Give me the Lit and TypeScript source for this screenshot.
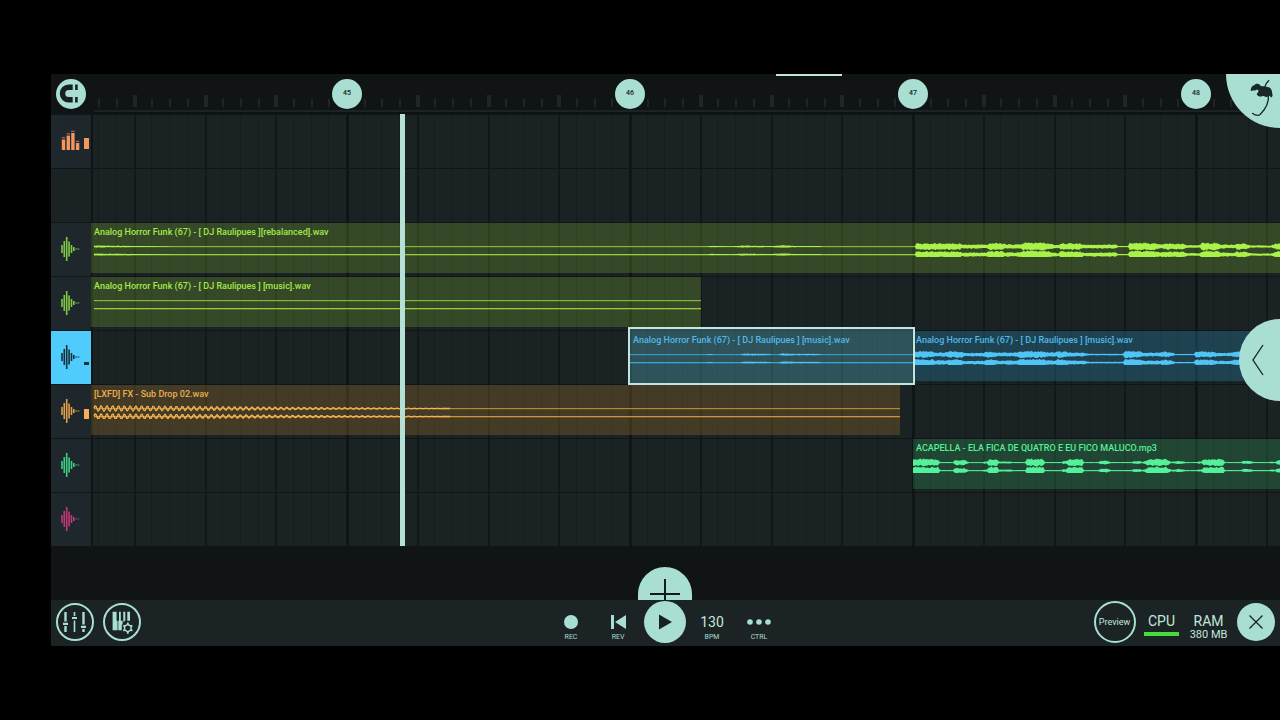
import { LitElement, html, svg, css, nothing } from "lit";
import { customElement, property, state } from "lit/decorators.js";
import { classMap } from "lit/directives/class-map.js";
import { styleMap } from "lit/directives/style-map.js";

type Point = [number, number];

interface Clip {
  name: string;
  start: number;
  end: number;
  tone: string;
  selected?: boolean;
  envelope?: Point[];
  sweep?: boolean;
}

interface Track {
  name: string;
  kind: "synth" | "audio";
  tone: string;
  level?: "high" | "mid" | "low";
  clips: Clip[];
}

const BAR = 283;
const FIRST_BAR = 45;
const FIRST_BAR_X = 256;
const VIEW_START = 44;
const SONG_END = 57;

const barX = (bar: number) =>
  Math.max(0, Math.round(FIRST_BAR_X + (bar - FIRST_BAR) * BAR));

const noise = (n: number) => {
  const v = Math.sin(n * 12.9898) * 43758.5453;
  return v - Math.floor(v);
};

const levelAt = (points: Point[], x: number) => {
  for (let i = 1; i < points.length; i++) {
    const [x0, a0] = points[i - 1];
    const [x1, a1] = points[i];
    if (x <= x1) return a0 + ((a1 - a0) * (x - x0)) / (x1 - x0 || 1);
  }
  return 0;
};

const wavePath = (points: Point[], mid: number, seed: number) => {
  const from = points[0][0];
  const to = points[points.length - 1][0];
  let top = "";
  let bottom = "";
  for (let x = from; x <= to; x++) {
    const a = levelAt(points, x);
    const up = a * (0.7 + 0.5 * noise(x + seed));
    const down = a * (0.7 + 0.5 * noise(x * 3 + seed));
    top += `${top ? "L" : "M"}${x} ${(mid - up).toFixed(1)}`;
    bottom = `L${x} ${(mid + down).toFixed(1)}` + bottom;
  }
  return top + bottom + "Z";
};

const SWEEP_LENGTH = 360;

const sweepPath = (mid: number) => {
  let d = "";
  for (let x = 3; x < SWEEP_LENGTH; x++) {
    const a = 2.8 * (1 - x / SWEEP_LENGTH);
    d += `${d ? "L" : "M"}${x} ${(mid + a * Math.sin((x * Math.PI * 2) / 5.8)).toFixed(1)}`;
  }
  return d;
};

const FUNK: Point[] = [
  [3, 0.9], [30, 0.7], [60, 0.4], [90, 0], [616, 0], [620, 0.7], [640, 0.2], [652, 0.9], [680, 0.5], [692, 1.1],
  [706, 0.5], [728, 0.5], [732, 0], [824, 0], [825, 3], [869, 3], [871, 2], [896, 2], [899, 3.2], [912, 3],
  [914, 2], [930, 2], [932, 3.6], [955, 3.6], [965, 1.5], [968, 1.7], [969, 3], [989, 3], [993, 1.8],
  [1025, 2], [1027, 0.5], [1037, 0.5], [1039, 3.6], [1062, 3.2], [1070, 2], [1076, 2.8], [1092, 2.6],
  [1096, 1.2], [1109, 1.2], [1111, 3.6], [1126, 3.4], [1130, 2], [1144, 1.6], [1146, 3], [1155, 2.6],
  [1160, 1], [1180, 1], [1186, 3], [1200, 3],
];

const INTRO: Point[] = [
  [76, 0], [80, 0.7], [84, 0], [110, 0], [114, 0.9], [138, 0.6], [142, 0], [148, 0], [152, 1.1], [166, 0.6],
  [188, 0.7], [192, 0],
];

const MUSIC: Point[] = [
  [0, 3], [20, 3], [22, 2], [34, 2], [36, 3], [48, 3], [51, 1.6], [71, 1.8], [73, 3], [80, 2.8], [84, 1.8],
  [105, 2], [107, 3.2], [130, 3], [134, 2], [143, 2], [145, 3], [152, 2.8], [155, 2], [172, 1.6], [176, 0.7],
  [210, 0.7], [212, 3.4], [227, 3], [230, 1.8], [247, 1.8], [249, 2.6], [258, 2.2], [262, 0.6], [281, 0.6],
  [283, 3], [300, 2.6], [304, 1.5], [318, 1.5], [321, 2.6], [360, 2.6],
];

const VOICE: Point[] = [
  [0, 3.3], [25, 3.3], [27, 0.4], [40, 0.4], [42, 2.4], [52, 2.4], [56, 0.4], [70, 0.4], [71, 1], [74, 1],
  [76, 3.4], [84, 3.2], [86, 0.9], [98, 0.9], [100, 0.4], [112, 0.4], [114, 3.4], [130, 3.4], [132, 0.4],
  [149, 0.4], [150, 1.4], [153, 1.4], [156, 3.2], [169, 3.2], [171, 0.4], [185, 0.4], [188, 1.8], [194, 1.8],
  [198, 0.4], [219, 0.4], [221, 1.4], [227, 1.4], [229, 0.5], [231, 1], [236, 3], [244, 3.4], [254, 3],
  [258, 0.8], [261, 0.8], [265, 1.6], [270, 1.2], [273, 0.4], [284, 0.4], [286, 1.2], [288, 0.8], [291, 3],
  [310, 3.2], [312, 0.4], [328, 0.4], [331, 1.6], [337, 1.4], [341, 0.4], [357, 0.4], [359, 1], [362, 0.5],
  [365, 2], [372, 2],
];

const MUSIC_NAME = "Analog Horror Funk (67) - [ DJ Raulipues ] [music].wav";

const TRACKS: Track[] = [
  { name: "Synth", kind: "synth", tone: "coral", level: "high", clips: [] },
  { name: "Synth lane 2", kind: "synth", tone: "empty", clips: [] },
  {
    name: "Rebalanced", kind: "audio", tone: "lime",
    clips: [{
      name: "Analog Horror Funk (67) - [ DJ Raulipues ][rebalanced].wav",
      start: VIEW_START, end: SONG_END, tone: "lime", envelope: FUNK,
    }],
  },
  {
    name: "Music", kind: "audio", tone: "lime",
    clips: [{ name: MUSIC_NAME, start: VIEW_START, end: 46.25, tone: "lime" }],
  },
  {
    name: "Music 2", kind: "audio", tone: "active", level: "low",
    clips: [
      { name: MUSIC_NAME, start: 46, end: 47, tone: "blue", selected: true, envelope: INTRO },
      { name: MUSIC_NAME, start: 47, end: SONG_END, tone: "blue", envelope: MUSIC },
    ],
  },
  {
    name: "Sub drop", kind: "audio", tone: "amber", level: "mid",
    clips: [{ name: "[LXFD] FX - Sub Drop 02.wav", start: VIEW_START, end: 46.955, tone: "amber", sweep: true }],
  },
  {
    name: "Acapella", kind: "audio", tone: "green",
    clips: [{
      name: "ACAPELLA - ELA FICA DE QUATRO E EU FICO MALUCO.mp3",
      start: 47, end: SONG_END, tone: "green", envelope: VOICE,
    }],
  },
  { name: "Audio", kind: "audio", tone: "pink", clips: [] },
];

const steps = (bars: number) => {
  const out: { x: number; kind: "bar" | "beat" | "step" }[] = [];
  for (let i = -14; i < bars * 16; i++) {
    out.push({
      x: Math.round(FIRST_BAR_X + (i * BAR) / 16),
      kind: i % 16 === 0 ? "bar" : i % 4 === 0 ? "beat" : "step",
    });
  }
  return out;
};

@customElement("audio-clip")
class AudioClip extends LitElement {
  @property({ attribute: false }) clip!: Clip;

  static styles = css`
    :host { display: block; flex: none; height: 50px; }
    .clip {
      box-sizing: border-box; height: 50px; overflow: hidden; position: relative;
      background: var(--fill); color: var(--ink);
    }
    .lime { --fill: rgba(116, 162, 46, 0.3); --ink: #a4e84a; --line: #93cf3b; }
    .blue { --fill: rgba(44, 127, 165, 0.35); --ink: #4fb9e8; --line: #3aa3d2; }
    .amber { --fill: rgba(166, 118, 42, 0.3); --ink: #eead4d; --line: #cf9333; }
    .green { --fill: rgba(50, 156, 87, 0.3); --ink: #55f09a; --line: #35b56c; }
    .selected {
      --fill: rgba(81, 162, 180, 0.38);
      height: 54px; margin-top: -2px; padding-top: 2px;
      box-shadow: 0 0 0 2px #c3e6dc; z-index: 1;
    }
    .name {
      display: block; padding: 4px 0 0 3px; font-size: 9px; line-height: 11px;
      font-weight: 500; white-space: nowrap;
    }
    .wave { display: block; width: 100%; height: 20px; margin-top: -1px; }
    .rule { fill: var(--line); }
    .body { fill: var(--ink); }
    .lime .body { fill: #a9f24a; }
    .blue .body { fill: #50c4f5; }
    .sweep { fill: none; stroke: #f5b453; stroke-width: 1.3; }
  `;

  render() {
    const c = this.clip;
    const rule = c.start === VIEW_START ? 3 : 0;
    return html`
      <div class=${classMap({ clip: true, [c.tone]: true, selected: !!c.selected })}>
        <span class="name">${c.name}</span>
        <svg class="wave" aria-hidden="true">
          <rect class="rule" x=${rule} y="9" width="100%" height="1.2" opacity="0.85" />
          <rect class="rule" x=${rule} y="17" width="100%" height="1.3" />
          ${c.envelope
            ? svg`<path class="body" d=${wavePath(c.envelope, 9.5, 3)} />
                  <path class="body" d=${wavePath(c.envelope, 17.5, 11)} />`
            : nothing}
          ${c.sweep
            ? svg`<path class="sweep" d=${sweepPath(9.5)} /><path class="sweep" d=${sweepPath(17.5)} />`
            : nothing}
        </svg>
      </div>
    `;
  }
}

@customElement("track-head")
class TrackHead extends LitElement {
  @property({ attribute: false }) track!: Track;

  static styles = css`
    :host { display: block; }
    .head {
      all: unset; box-sizing: border-box; display: grid; grid-template-columns: 30px 1fr;
      align-items: center; width: 100%; height: 54px; padding-bottom: 2px;
      border-top: 1px solid #101617; background: #1e272b; color: var(--ink);
    }
    .head:focus-visible { box-shadow: inset 0 0 0 2px #a9dfd2; }
    .coral { --ink: #f59660; }
    .empty { background: #1a2224; }
    .lime { --ink: #80c946; }
    .active { --ink: #17303c; background: #4fcbfc; }
    .amber { --ink: #dfa04a; }
    .green { --ink: #3ccf84; }
    .pink { --ink: #c03a76; }
    .glyph { width: 30px; height: 26px; fill: currentColor; display: block; }
    .meter { width: 5px; margin-left: 3px; background: currentColor; }
    .high { height: 11px; margin-top: 6px; }
    .mid { height: 10px; margin-top: 6px; background: #f8ab52; }
    .low { height: 3px; margin-top: 13px; }
  `;

  glyph() {
    const t = this.track;
    if (t.tone === "empty") return nothing;
    if (t.kind === "synth") {
      const cols: Point[] = [[10.8, 11.5], [15.6, 7.6], [20.2, 5], [24.9, 15]];
      return html`<svg class="glyph" viewBox="0 0 30 26" aria-hidden="true">
        ${cols.map(([x, y]) => svg`
          <rect x=${x} y=${y - 2.2} width="3.4" height="1" opacity="0.8" />
          <rect x=${x} y=${y} width="3.4" height=${22 - y} />`)}
      </svg>`;
    }
    const bars: Point[] = [[11, 8], [13.3, 16], [15.7, 24], [18.1, 15], [20.5, 8], [22.8, 4], [25.2, 1], [27.4, 1]];
    return html`<svg class="glyph" viewBox="0 0 30 26" aria-hidden="true">
      ${bars.map(([x, h]) => svg`<rect x=${x - 0.8} y=${13 - h / 2} width="1.6" height=${h} />`)}
    </svg>`;
  }

  render() {
    const t = this.track;
    return html`<button class="head ${t.tone}" aria-label=${t.name}>
      <span>${this.glyph()}</span>
      ${t.level ? html`<span class="meter ${t.level}"></span>` : nothing}
    </button>`;
  }
}

@customElement("transport-bar")
class TransportBar extends LitElement {
  static styles = css`
    :host { display: block; }
    .bar {
      box-sizing: border-box; display: grid; grid-template-columns: 1fr auto 1fr;
      height: 46px; padding: 0 1px 2px 0; background: #1b2325; color: #a9dfd2;
    }
    .group { display: grid; grid-auto-flow: column; grid-auto-columns: 47px; }
    .end { justify-content: end; }
    button { all: unset; box-sizing: border-box; cursor: pointer; }
    button:focus-visible { outline: 1px solid #fff; }
    svg { display: block; }
    .item { display: flex; flex-direction: column; align-items: center; padding-top: 11px; height: 44px; }
    .icon { display: grid; place-items: center; height: 22px; }
    .label { font-size: 7px; line-height: 8px; }
    .value { font-size: 14px; line-height: 22px; color: #c3e6dc; }
    .disc {
      place-self: center; display: grid; place-items: center; border-radius: 50%;
      width: 38px; height: 38px;
    }
    .ring { border: 2px solid #a9dfd2; }
    .solid { background: #a9dfd2; color: #182124; }
    .large { width: 42px; height: 42px; }
    .preview { font-size: 9px; line-height: 12px; color: #c3e6dc; }
    .stat {
      display: flex; flex-direction: column; align-items: center; padding-top: 13px;
      white-space: nowrap; color: #c3e6dc;
    }
    .title { font-size: 14px; line-height: 16px; }
    .amount { font-size: 11px; line-height: 12px; }
    .load { width: 35px; height: 4px; margin-top: 3px; background: #43dc3c; }
  `;

  render() {
    return html`
      <div class="bar">
        <div class="group">
          <button class="disc ring" aria-label="Mixer">
            <svg width="26" height="26" viewBox="0 0 26 26" fill="none" stroke="currentColor">
              <path stroke-width="2.4" d="M3.500 3v9.500M3.500 17v6M21.500 3v12.500M21.500 20v3" />
              <path stroke-width="1.6" d="M12.500 3v4M12.500 11.500v11.500" />
              <path stroke-width="2.2" d="M1 14.800h5M10 9h5M19 17.800h5" />
            </svg>
          </button>
          <button class="disc ring" aria-label="Keyboard settings">
            <svg width="26" height="26" viewBox="0 0 26 26">
              <path fill="currentColor" d="M3.600 2.800h4v9h1v9.400h-5zM10 2.800h1.800v9h1.800v9.400H9.300v-9.400H10zM14.300 2.800h2v9h-.2l-1.800 1.200zM18.300 2.800h2.700v9h-2.700z" />
              <path fill="#1b2325" stroke="#1b2325" stroke-width="4" d="M18.800 14.500l4 2.300v4.500l-4 2.300-4-2.300v-4.500z" />
              <path fill="none" stroke="currentColor" stroke-width="1.500" d="M18.800 15.400l3.200 1.900v3.600l-3.200 1.900-3.200-1.900v-3.600z" />
              <path stroke="currentColor" stroke-width="1.800" d="M18.800 15.200v-1.700M18.800 23v1.700M22.100 17.200l1.300-.8M22.100 21l1.300.8M15.500 17.200l-1.300-.8M15.500 21l-1.300.8" />
            </svg>
          </button>
        </div>

        <div class="group">
          <button class="item">
            <span class="icon"><svg width="14" height="14"><circle cx="7" cy="7" r="7" fill="currentColor" /></svg></span>
            <span class="label">REC</span>
          </button>
          <button class="item">
            <span class="icon"><svg width="15" height="14" fill="currentColor">
              <path d="M0 0h3v14H0zM4 7l11-7v14z" /></svg></span>
            <span class="label">REV</span>
          </button>
          <button class="disc solid large" aria-label="Play">
            <svg width="20" height="16"><path fill="currentColor" d="M4 0.500l13 7.500-13 7.500z" /></svg>
          </button>
          <button class="item">
            <span class="value">130</span>
            <span class="label">BPM</span>
          </button>
          <button class="item">
            <span class="icon"><svg width="24" height="6" fill="currentColor">
              <circle cx="3" cy="3" r="2.800" /><circle cx="12" cy="3" r="2.800" /><circle cx="21" cy="3" r="2.800" />
            </svg></span>
            <span class="label">CTRL</span>
          </button>
        </div>

        <div class="group end">
          <button class="disc ring large preview">Preview</button>
          <div class="stat"><span class="title">CPU</span><span class="load"></span></div>
          <div class="stat"><span class="title">RAM</span><span class="amount">380 MB</span></div>
          <button class="disc solid" aria-label="Close">
            <svg width="14" height="14"><path d="M0.500 0.500l13 13M13.500 0.500l-13 13" stroke="currentColor" stroke-width="1.300" /></svg>
          </button>
        </div>
      </div>
    `;
  }
}

@customElement("app-root")
class AppRoot extends LitElement {
  @state() private playhead = 45.196;
  @state() private viewWidth = window.innerWidth;

  private onResize = () => {
    this.viewWidth = window.innerWidth;
  };

  connectedCallback() {
    super.connectedCallback();
    window.addEventListener("resize", this.onResize);
  }

  disconnectedCallback() {
    window.removeEventListener("resize", this.onResize);
    super.disconnectedCallback();
  }

  static styles = css`
    :host {
      box-sizing: border-box; display: flex; min-height: 100vh; padding: 74px 0 74px 51px;
      background: #000; font-family: Roboto, "Liberation Sans", sans-serif; overflow: hidden;
    }
    button { all: unset; box-sizing: border-box; cursor: pointer; }
    button:focus-visible { outline: 1px solid #fff; }
    svg { display: block; }
    .studio {
      position: relative; flex: 1; min-width: 0; display: flex; flex-direction: column;
      background: #111415; overflow: hidden;
    }
    .top { display: grid; grid-template-columns: 40px 1fr; height: 40px; }
    .snap { place-self: center; width: 30px; height: 30px; border-radius: 50%; background: #a9dfd2; }
    .ruler { position: relative; min-width: 0; overflow: hidden; }
    .layer { position: absolute; inset: 0; width: 100%; height: 100%; }
    .bars { position: relative; display: flex; gap: 253px; padding: 5px 0 0 241px; }
    .bar-number {
      flex: none; width: 30px; height: 30px; border-radius: 50%; background: #a9dfd2; color: #16211f;
      font-size: 7px; line-height: 28px; font-weight: 500; text-align: center;
    }
    .tick { fill: #1e2628; }
    .edge { fill: #1c2325; }
    .gutter { fill: #0d1213; }
    .scroll { position: absolute; left: 59%; top: 0; width: 66px; height: 2px; background: #c3e6dc; }
    .playlist { display: grid; grid-template-columns: 40px 1fr; }
    .lanes { position: relative; min-width: 0; overflow: hidden; background: #1a2224; }
    .lane {
      position: relative; box-sizing: border-box; display: flex; height: 54px;
      border-top: 1px solid #101617;
    }
    .bar { fill: #0f1516; }
    .beat { fill: #111819; }
    .step { fill: #141c1d; }
    .playhead { position: absolute; top: 0; bottom: 0; width: 5px; background: #b4e0d5; }
    .tail {
      flex: 1; display: flex; justify-content: center; align-items: flex-end;
      min-height: 54px; padding-right: 1px;
    }
    .add { width: 54px; height: 33px; border-radius: 27px 27px 0 0; background: #a9dfd2; }
    .logo {
      position: absolute; top: 0; right: 0; width: 54px; height: 54px;
      border-bottom-left-radius: 54px; background: #a9dfd2;
    }
    .drawer {
      position: absolute; top: calc(50% - 41px); right: 0; width: 41px; height: 82px; padding-right: 4px;
      border-radius: 41px 0 0 41px; background: #a9dfd2; display: grid; place-items: center;
    }
  `;

  render() {
    const laneWidth = this.viewWidth - 91;
    const bars = Math.max(1, Math.floor((laneWidth - FIRST_BAR_X - 15) / BAR) + 1);
    const marks = steps(bars + 1);
    return html`
      <main class="studio">
        <header class="top">
          <button class="snap" aria-label="Snap">
            <svg width="30" height="30" viewBox="0 0 30 30" fill="none" stroke="#172022">
              <path stroke-width="5.500" d="M16.700 8.200H12.800a6.300 6.300 0 0 0 0 12.600h3.900" />
              <path stroke-width="2.600" d="M20.400 5.400v5.600M20.400 18v5.600" />
            </svg>
          </button>
          <div class="ruler">
            <svg class="layer" aria-hidden="true">
              ${marks.map((m) => m.kind === "step"
                ? svg`<rect class="tick" x=${m.x - 1} y="25" width="2" height="8" />`
                : svg`<rect class="tick" x=${m.x - 2} y="21" width="4" height="12" />`)}
              <rect class="edge" x="3" y="36" width="100%" height="2" />
              <rect class="gutter" x="0" y="38" width="100%" height="2" />
            </svg>
            <div class="bars">
              ${Array.from({ length: bars }, (_, i) => html`<span class="bar-number">${FIRST_BAR + i}</span>`)}
            </div>
          </div>
        </header>

        <section class="playlist">
          <div>${TRACKS.map((t) => html`<track-head .track=${t}></track-head>`)}</div>
          <div class="lanes">
            <svg class="layer" aria-hidden="true">
              <rect class="bar" x="0" y="0" width="2" height="100%" />
              ${marks.map((m) => {
                const w = m.kind === "bar" ? 3 : m.kind === "beat" ? 2 : 1;
                return svg`<rect class=${m.kind} x=${m.x - 1} y="0" width=${w} height="100%" />`;
              })}
            </svg>
            ${TRACKS.map((t) => {
              let cursor = 0;
              return html`<div class="lane">
                ${t.clips.map((c) => {
                  const from = barX(c.start);
                  const to = barX(c.end);
                  const place = { marginLeft: `${from - cursor}px`, width: `${to - from}px` };
                  cursor = to;
                  return html`<audio-clip .clip=${c} style=${styleMap(place)}></audio-clip>`;
                })}
              </div>`;
            })}
            <div class="playhead" style=${styleMap({ left: `${barX(this.playhead) - 2}px` })}></div>
          </div>
        </section>

        <div class="tail">
          <button class="add" aria-label="Add track">
            <svg width="54" height="33"><path d="M27 12v21M12 27h30" stroke="#111b1b" stroke-width="2" /></svg>
          </button>
        </div>

        <transport-bar></transport-bar>

        <span class="scroll"></span>
        <button class="logo" aria-label="Main menu">
          <svg width="54" height="54" viewBox="0 0 163 163">
            <path fill="#18272a" d="M75 51C74 43 79 34 86 34C90 28 100 28 105 36C111 39 116 35 123 39C133 38 140 48 139 57C142 62 140 70 137 71C134 69 132 65 129 65C127 68 123 71 119 69C115 66 113 66 107 68C99 69 91 62 93 59C97 57 99 52 97 48C90 46 88 52 82 49C79 49 77 53 75 51Z" />
            <path fill="none" stroke="#18272a" stroke-width="4" d="M117 40C120 30 124 24 130 19M128 62C130 85 118 108 103 122C94 129 86 123 79 118" />
          </svg>
        </button>
        <button class="drawer" aria-label="Open panel">
          <svg width="12" height="32"><path d="M11 1L1 16l10 15" fill="none" stroke="#142022" stroke-width="1.300" /></svg>
        </button>
      </main>
    `;
  }
}
